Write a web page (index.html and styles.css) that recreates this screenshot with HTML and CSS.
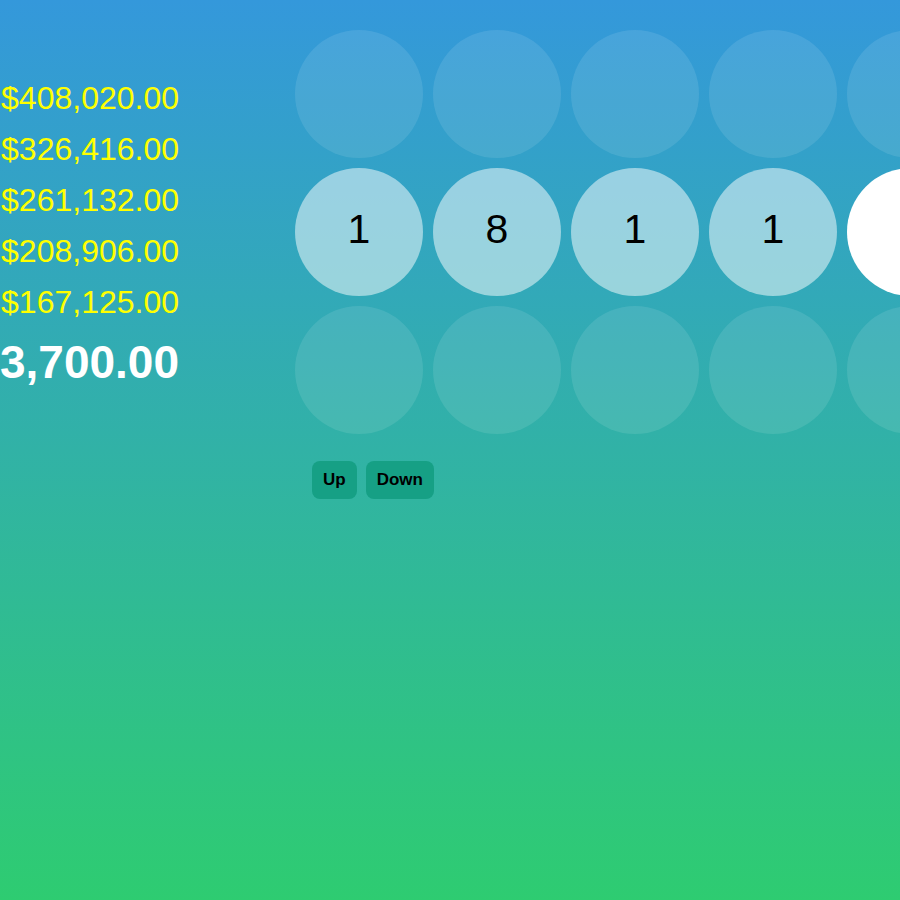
FILE: index.html
```html
<!DOCTYPE html>
<html>
<head>
<meta charset="utf-8">
<link rel="stylesheet" href="styles.css">
</head>
<body>
<div class="page">
  <div class="ladder">
    <div class="amount">$408,020.00</div>
    <div class="amount">$326,416.00</div>
    <div class="amount">$261,132.00</div>
    <div class="amount">$208,906.00</div>
    <div class="amount">$167,125.00</div>
    <div class="amount current">$133,700.00</div>
  </div>
  <div class="board">
    <div class="grid">
      <div class="cell faint"></div>
      <div class="cell faint"></div>
      <div class="cell faint"></div>
      <div class="cell faint"></div>
      <div class="cell faint"></div>
      <div class="cell mid">1</div>
      <div class="cell mid">8</div>
      <div class="cell mid">1</div>
      <div class="cell mid">1</div>
      <div class="cell active"></div>
      <div class="cell faint"></div>
      <div class="cell faint"></div>
      <div class="cell faint"></div>
      <div class="cell faint"></div>
      <div class="cell faint"></div>
    </div>
    <div class="controls">
      <button class="btn">Up</button>
      <button class="btn">Down</button>
    </div>
  </div>
</div>
</body>
</html>
```
FILE: styles.css
```css
html, body {
  margin: 0;
  padding: 0;
  height: 100%;
}
body {
  background: linear-gradient(to bottom, #3498db, #2ecc71);
  font-family: "Liberation Sans", Arial, sans-serif;
  overflow: hidden;
}
.page {
  display: flex;
  align-items: flex-start;
  height: 900px;
}
.ladder {
  width: 179px;
  flex: none;
  display: flex;
  flex-direction: column;
  align-items: flex-end;
  padding-top: 73px;
}
.amount {
  color: #ffff00;
  font-size: 32px;
  line-height: 51px;
  white-space: nowrap;
}
.amount.current {
  color: #ffffff;
  font-weight: bold;
  font-size: 46px;
  line-height: 60px;
  margin-top: 4px;
}
.board {
  margin-left: 116px;
  padding-top: 30px;
  flex: none;
}
.grid {
  display: grid;
  grid-template-columns: repeat(5, 128px);
  grid-auto-rows: 128px;
  gap: 10px;
}
.cell {
  border-radius: 50%;
  display: flex;
  align-items: center;
  justify-content: center;
  font-size: 41px;
  color: #000;
  padding-bottom: 6px;
  box-sizing: border-box;
}
.cell.faint {
  background: rgba(255, 255, 255, 0.1);
}
.cell.mid {
  background: rgba(255, 255, 255, 0.5);
}
.cell.active {
  background: #ffffff;
}
.controls {
  display: flex;
  gap: 9px;
  margin-top: 27px;
  margin-left: 17px;
}
.btn {
  background: #16a085;
  border: none;
  border-radius: 8px;
  font-family: "Liberation Sans", Arial, sans-serif;
  font-weight: bold;
  font-size: 17px;
  color: #000;
  height: 38px;
  padding: 0 11px;
}
```
